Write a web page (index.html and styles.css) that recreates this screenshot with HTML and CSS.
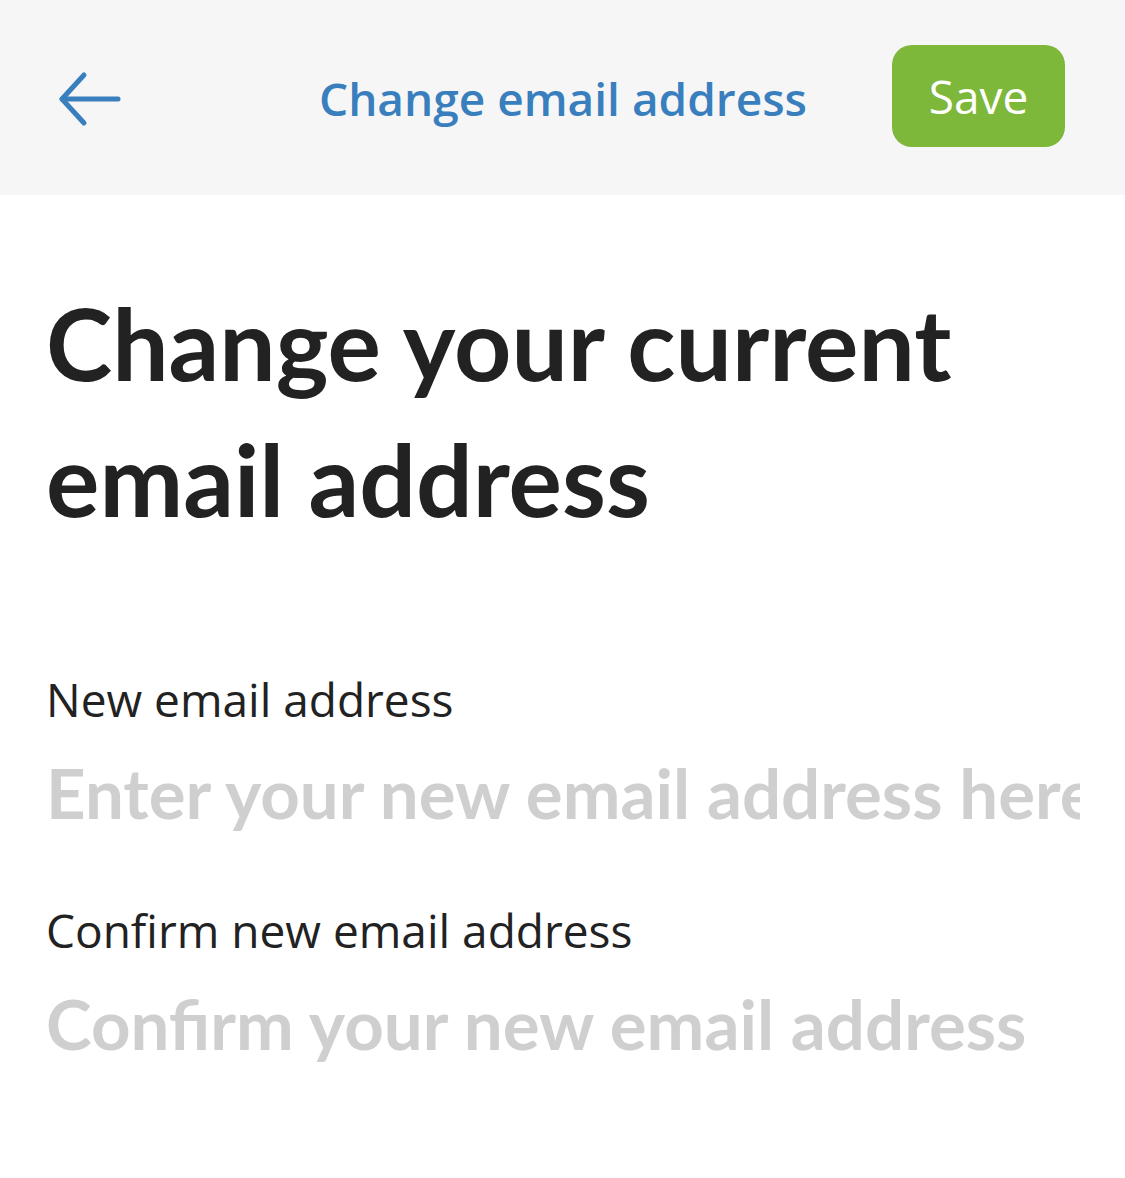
FILE: index.html
```html
<!DOCTYPE html>
<html lang="en">
<head>
  <meta charset="UTF-8" />
  <meta name="viewport" content="width=device-width, initial-scale=1.0" />
  <title>Change email address</title>
  <link rel="stylesheet" href="styles.css">
</head>
<body>
  <header class="topbar">
    <button class="back" aria-label="Back">
      <svg width="64" height="56" viewBox="0 0 64 56" fill="none" stroke="#3a7fbd" stroke-width="5" stroke-linecap="round" stroke-linejoin="round">
        <path d="M60 28H4" />
        <path d="M26 4L4 28L26 52" />
      </svg>
    </button>
    <div class="topbar-title">Change email address</div>
    <button class="save">Save</button>
  </header>

  <main class="content">
    <h1>Change your current email address</h1>

    <div class="field">
      <label for="new-email">New email address</label>
      <input id="new-email" type="email" placeholder="Enter your new email address here" />
    </div>

    <div class="field">
      <label for="confirm-email">Confirm new email address</label>
      <input id="confirm-email" type="email" placeholder="Confirm your new email address" />
    </div>
  </main>
</body>
</html>
```

FILE: styles.css
```css
body {
  margin: 0;
  background-color: #fff;
  font-family: "Open Sans", sans-serif;
  color: #222;
}
.topbar {
  display: flex;
  align-items: center;
  justify-content: space-between;
  height: 195px;
  padding: 0 60px 0 58px;
  background-color: #f6f6f6;
  box-sizing: border-box;
}
.back {
  display: flex;
  background: none;
  border: none;
  padding: 0;
  margin-top: 2px;
}
.topbar-title {
  font-size: 46px;
  font-weight: 600;
  color: #3a7fbd;
  margin-left: 112px;
}
.save {
  width: 173px;
  height: 102px;
  margin-top: -4px;
  border: none;
  border-radius: 20px;
  background-color: #7db83b;
  color: #fff;
  font-family: "Open Sans", sans-serif;
  font-size: 46px;
}
.content {
  padding: 79px 45px 0 46px;
}
h1 {
  margin: 0 0 125px;
  font-family: Lato, sans-serif;
  font-weight: 700;
  font-size: 100px;
  line-height: 136px;
  color: #222;
}
.field {
  display: flex;
  flex-direction: column;
  margin-bottom: 64px;
}
label {
  font-size: 46px;
  line-height: 56px;
  color: #222;
}
input {
  margin-top: 21px;
  padding: 0;
  border: none;
  outline: none;
  font-family: Lato, sans-serif;
  font-weight: 700;
  font-size: 69px;
  line-height: 90px;
  color: #222;
  background: none;
}
input::placeholder {
  color: #cfcfcf;
}
```
